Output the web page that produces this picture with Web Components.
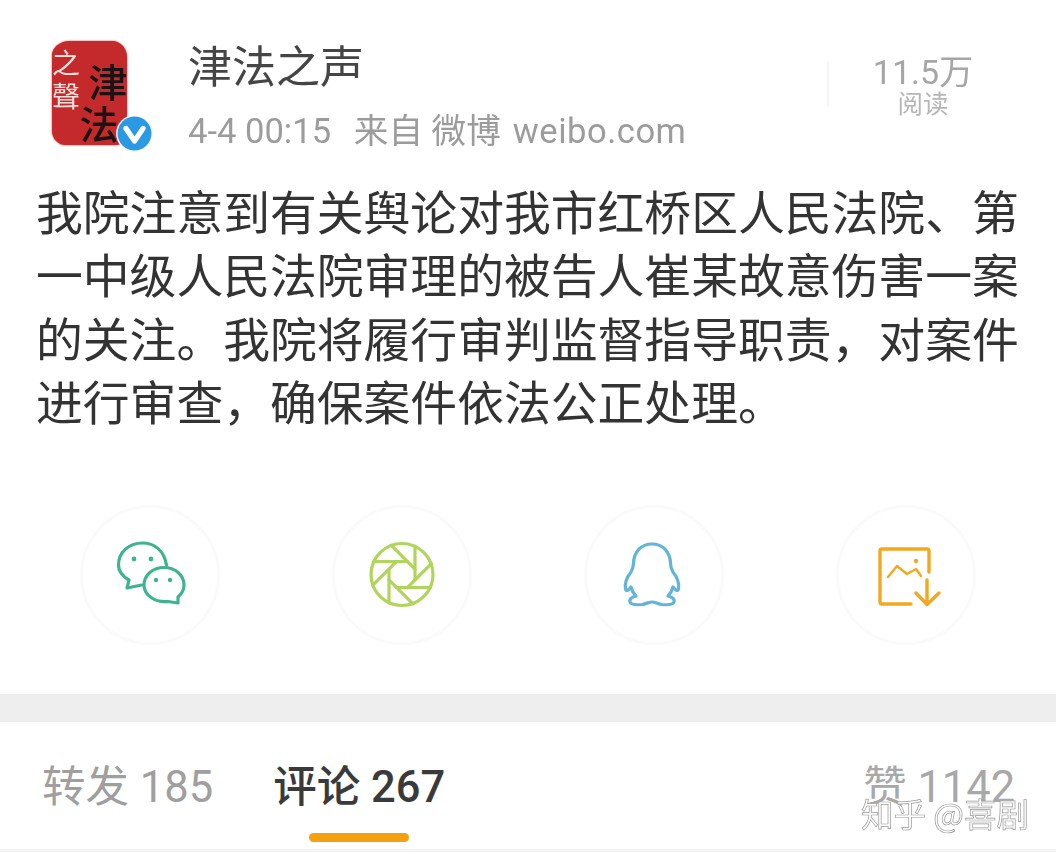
<!DOCTYPE html>
<html lang="zh"><head><meta charset="utf-8"><style>
html,body{margin:0;padding:0;background:#fff}
body{width:1056px;height:858px;overflow:hidden;font-family:Roboto,"Noto Sans CJK SC",sans-serif;position:relative}
</style></head><body>
<weibo-post>
  <post-header name="津法之声" count="11.5万" label="阅读"></post-header>
  <post-body>我院注意到有关舆论对我市红桥区人民法院、第一中级人民法院审理的被告人崔某故意伤害一案的关注。我院将履行审判监督指导职责，对案件进行审查，确保案件依法公正处理。</post-body>
  <share-bar>
    <share-btn><svg viewBox="0 0 140 140" fill="none" stroke="#3fb390" stroke-width="3.2" stroke-linejoin="round" stroke-linecap="round"><path d="M61.7 80 L47 83 L49 75 C42 71 38.5 66 38.5 60 C38.5 47 49 38 62.5 38 C74 38 84 45 86.5 60"/><path d="M64 80 C64 70 73 62.5 84 62.5 C95 62.5 104 70 104 80 C104 85 101.5 89 98 92 L98 98 L88 96.5 C75 98 64 90 64 80 Z"/><g fill="#3fb390" stroke="none"><circle cx="54" cy="54" r="2.4"/><circle cx="71" cy="54" r="2.4"/><circle cx="76" cy="75" r="2.2"/><circle cx="90" cy="75" r="2.2"/></g></svg></share-btn>
    <share-btn><svg viewBox="0 0 140 140" fill="none" stroke="#b1d55c" stroke-width="3.2" stroke-linecap="round"><g transform="translate(70 69.5)"><circle r="31"/><path d="M13 5.4V-28.5"/><path transform="rotate(45)" d="M13 5.4V-28.5"/><path transform="rotate(90)" d="M13 5.4V-28.5"/><path transform="rotate(135)" d="M13 5.4V-28.5"/><path transform="rotate(180)" d="M13 5.4V-28.5"/><path transform="rotate(225)" d="M13 5.4V-28.5"/><path transform="rotate(270)" d="M13 5.4V-28.5"/><path transform="rotate(315)" d="M13 5.4V-28.5"/></g></svg></share-btn>
    <share-btn><svg viewBox="0 0 140 140" fill="none" stroke="#62b4d8" stroke-width="3.2" stroke-linejoin="round"><path d="M68 39 C57 39 50 47 49.5 58 C49.5 62 49 64 47 67 C43 72 40.5 78 41.5 84 C42 87 45 85 47 82 C48 86 50 89 52 91 C48 92 45 94 46 97 C47 100 53 100 58 99.5 C62 99 65 97 68 97 C71.5 97 74 99 78 99.5 C83 100 89 100 90 97 C91 94 88 92 84 91 C86 89 88 86 89 82 C91 85 94 87 94.5 84 C95.5 78 93 72 89 67 C87 64 86.5 62 86.5 58 C86 47 79 39 68 39 Z"/></svg></share-btn>
    <share-btn><svg viewBox="0 0 140 140" fill="none" stroke="#f2a81f" stroke-width="3.4" stroke-linecap="round" stroke-linejoin="round"><path d="M93 67 V46 Q93 44 91 44 H46 Q44 44 44 46 V97 Q44 99 46 99 H75"/><path d="M91 75 V99 M80 88 L91 99.5 L103 88"/><path d="M52 72 L61 61 L71 69 L80 64 L85 71" stroke-width="2.4"/><circle cx="80" cy="56" r="2.2" fill="#f2a81f" stroke="none"/></svg></share-btn>
  </share-bar>
  <tab-bar>
    <tab-item>转发 185</tab-item>
    <tab-item active>评论 267</tab-item>
    <tab-item end>赞 1142</tab-item>
  </tab-bar>
</weibo-post>
<water-mark>知乎 @喜剧</water-mark>
<script>
function def(name, css, html){
  customElements.define(name, class extends HTMLElement{
    constructor(){super();const s=this.attachShadow({mode:'open'});
      s.innerHTML='<style>'+css+'</style>'+(typeof html==='function'?html(this):html);}
  });
}
def('weibo-post',':host{display:flex;flex-direction:column;width:1056px;height:858px;filter:blur(.55px)}','<slot></slot>');
def('post-header',`
:host{display:flex;align-items:flex-start;height:178px;box-sizing:border-box;padding:41px 0 0 52px;color:#444}
.av{position:relative;width:75px;height:104px;flex:none;margin-right:61px}
.seal{width:75px;height:104px;background:#c42a2b;border-radius:24% 20% 14% 18%/14% 16% 10% 14%;display:flex;box-shadow:0 0 2px #c42a2b}
.c{display:flex;flex-direction:column;align-items:center;line-height:1;font-family:"Noto Sans CJK SC",serif}
.w{width:28px;color:#f3dfdc;font-size:28px;padding-top:7px;gap:5px;flex:none}
.k{width:44px;color:#1b1214;font-size:39px;font-weight:500;padding-top:20px;margin-left:6px;flex:none}
.k span+span{transform:translateX(-9px);margin-top:3px}
.v{position:absolute;left:64px;top:74px;width:37px;height:37px}
.main{display:flex;flex-direction:column;flex:none;width:639px}
.n{font-size:44px;line-height:52px;margin-top:1px;color:#454545;height:52px;white-space:pre}
.m{font-size:34.6px;line-height:44px;margin-top:15px;color:#9c9c9c;white-space:pre}
.m u{text-decoration:none;margin-left:-3px}
.m b{font-weight:400;letter-spacing:.5px;margin-left:3px}
.div{width:2px;height:46px;background:#f6f6f6;margin-top:20px;flex:none}
.st{flex:1;display:flex;flex-direction:column;align-items:center;padding:10px 39px 0 0}
.a{font-size:34px;line-height:42px;color:#a6a6a6;white-space:nowrap}
.b{font-size:25.5px;line-height:26px;color:#b6b6b6;margin-top:-2px;white-space:nowrap}
`,h=>`<div class="av"><div class="seal"><div class="c w"><span>之</span><span>聲</span></div><div class="c k"><span>津</span><span>法</span></div></div>
<svg class="v" viewBox="0 0 37 37"><circle cx="18.5" cy="18.5" r="18.4" fill="#fff"/><circle cx="18.5" cy="18.5" r="17" fill="#2a9ae4"/><path d="M10 13.5 L18.5 26 L27 13.5" fill="none" stroke="#fff" stroke-width="5.2" stroke-linejoin="round" stroke-linecap="round"/></svg></div>
<div class="main"><div class="n">${h.getAttribute('name')}</div><div class="m">4-4 00:15   <u>来自 微博</u><b> weibo.com</b></div></div>
<div class="div"></div><div class="st"><div class="a">${h.getAttribute('count')}</div><div class="b">${h.getAttribute('label')}</div></div>`);
def('post-body',`:host{display:block;height:327px;box-sizing:border-box;padding:0 35px 0 36px;font-size:46.8px;line-height:63.3px;color:#333;font-family:"Noto Sans CJK SC",sans-serif}`,'<slot></slot>');
def('share-bar',`:host{display:grid;grid-template-columns:repeat(4,252px);padding:0 24px;height:189px;box-sizing:border-box;align-items:start;justify-items:center}`,'<slot></slot>');
def('share-btn',`:host{display:block;width:140px;height:140px;box-sizing:border-box;border-radius:50%;border:3px solid #fafafa}
::slotted(svg){display:block;width:140px;height:140px;margin:-3px}`,'<slot></slot>');
def('tab-bar',`:host{display:flex;align-items:flex-start;box-sizing:border-box;height:158px;padding-left:42px;background:#fff;border-top:28px solid #eee;position:relative}
:host::after{content:"";position:absolute;left:0;right:0;bottom:0;height:3px;background:#f3f3f3}`,'<slot></slot>');
def('tab-item',`:host{display:flex;flex-direction:column;align-items:center;flex:none;margin-top:40px;font-size:43.5px;line-height:52px;color:#9f9f9f;white-space:nowrap;margin-right:60px}
:host([active]){color:#3a3a3a;font-weight:500;margin-right:418px}
:host([end]){color:#a8a8a8;margin-right:0}
i{display:none}
:host([active]) i{display:block;width:100px;height:9px;border-radius:4.5px;background:#f5a10f;margin-top:19px}`,'<slot></slot><i></i>');
def('water-mark',`:host{position:absolute;left:861px;top:793px;font-size:32.5px;line-height:40px;color:#fff;white-space:nowrap;-webkit-text-stroke:.7px #999;font-family:"Noto Sans CJK SC",sans-serif}`,'<slot></slot>');
</script>
</body></html>
